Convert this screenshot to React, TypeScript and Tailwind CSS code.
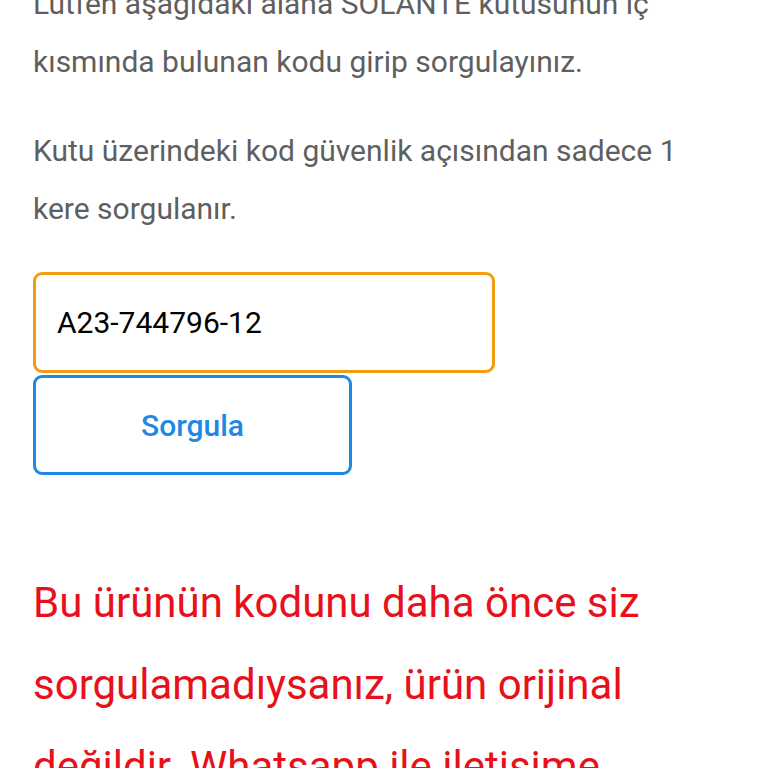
export default function App() {
  return (
    <div className="h-[768px] w-[768px] overflow-hidden bg-white font-['Roboto',sans-serif]">
      <div className="mt-[-25px] pl-[33px]">
        <p className="w-[650px] text-[30px] leading-[58px] text-[#5f5f5f]">
          Lütfen aşağıdaki alana SOLANTE kutusunun iç kısmında bulunan kodu girip sorgulayınız.
        </p>
        <p className="mt-[31px] w-[650px] text-[30px] leading-[58px] text-[#5f5f5f]">
          Kutu üzerindeki kod güvenlik açısından sadece 1 kere sorgulanır.
        </p>

        <div className="mt-[34px] flex h-[101px] w-[462px] items-center rounded-[9px] border-[3px] border-[#f39c12] px-[21px] text-[30px] text-black">
          A23-744796-12
        </div>
        <button className="mt-[2px] flex h-[100px] w-[319px] items-center justify-center rounded-[9px] border-[3px] border-[#1e88e5] text-[30px] font-medium text-[#1e88e5]">
          Sorgula
        </button>

        <p className="mt-[87px] w-[650px] text-[42px] leading-[82px] text-[#e8101a]">
          Bu ürünün kodunu daha önce siz sorgulamadıysanız, ürün orijinal değildir. Whatsapp ile iletişime geçiniz.
        </p>
      </div>
    </div>
  );
}
